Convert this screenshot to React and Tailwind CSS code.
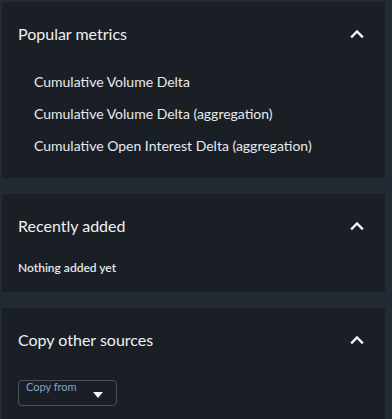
const font = { fontFamily: '"Lato", "Noto Sans", sans-serif' };

function Chevron() {
  return (
    <svg width="20" height="20" viewBox="0 0 20 20" className="shrink-0">
      <path d="M5 12.5 10 7.5 15 12.5" fill="none" stroke="#f3f4f6" strokeWidth="2.4" strokeLinecap="square" />
    </svg>
  );
}

function Panel({ title, children, className = '' }) {
  return (
    <section className={`bg-[#1a1f26] ${className}`}>
      <div className="flex h-16 items-center justify-between pl-4 pr-[18px]">
        <h2 className="text-[16px] text-[#eef0f2]">{title}</h2>
        <Chevron />
      </div>
      {children}
    </section>
  );
}

export default function App() {
  const metrics = [
    'Cumulative Volume Delta',
    'Cumulative Volume Delta (aggregation)',
    'Cumulative Open Interest Delta (aggregation)',
  ];
  return (
    <div className="h-[419px] overflow-hidden bg-[#222a33] pl-[2px] pr-[7px] pt-[2px]" style={font}>
      <div className="flex flex-col gap-4">
        <Panel title="Popular metrics" className="pb-[17px]">
          <ul className="-mt-px pl-8">
            {metrics.map((m) => (
              <li key={m} className="flex h-8 items-center text-[14px] text-[#e8eaed]">
                {m}
              </li>
            ))}
          </ul>
        </Panel>
        <Panel title="Recently added" className="pb-[14px]">
          <p className="flex h-5 items-center pl-4 text-[12px] font-semibold text-[#e5e7ea]">Nothing added yet</p>
        </Panel>
        <Panel title="Copy other sources" className="pb-6">
          <div className="pl-4 pt-2">
            <button
              type="button"
              className="relative h-[26px] w-[99px] rounded border border-[#4a525c] text-left"
            >
              <span className="absolute left-[7px] top-0 text-[11px] leading-[12px] text-[#7fa3c6]">Copy from</span>
              <svg width="10" height="6" viewBox="0 0 10 6" className="absolute right-[13px] top-[11px]">
                <path d="M0 0h10L5 6z" fill="#f3f4f6" />
              </svg>
            </button>
          </div>
        </Panel>
      </div>
    </div>
  );
}
